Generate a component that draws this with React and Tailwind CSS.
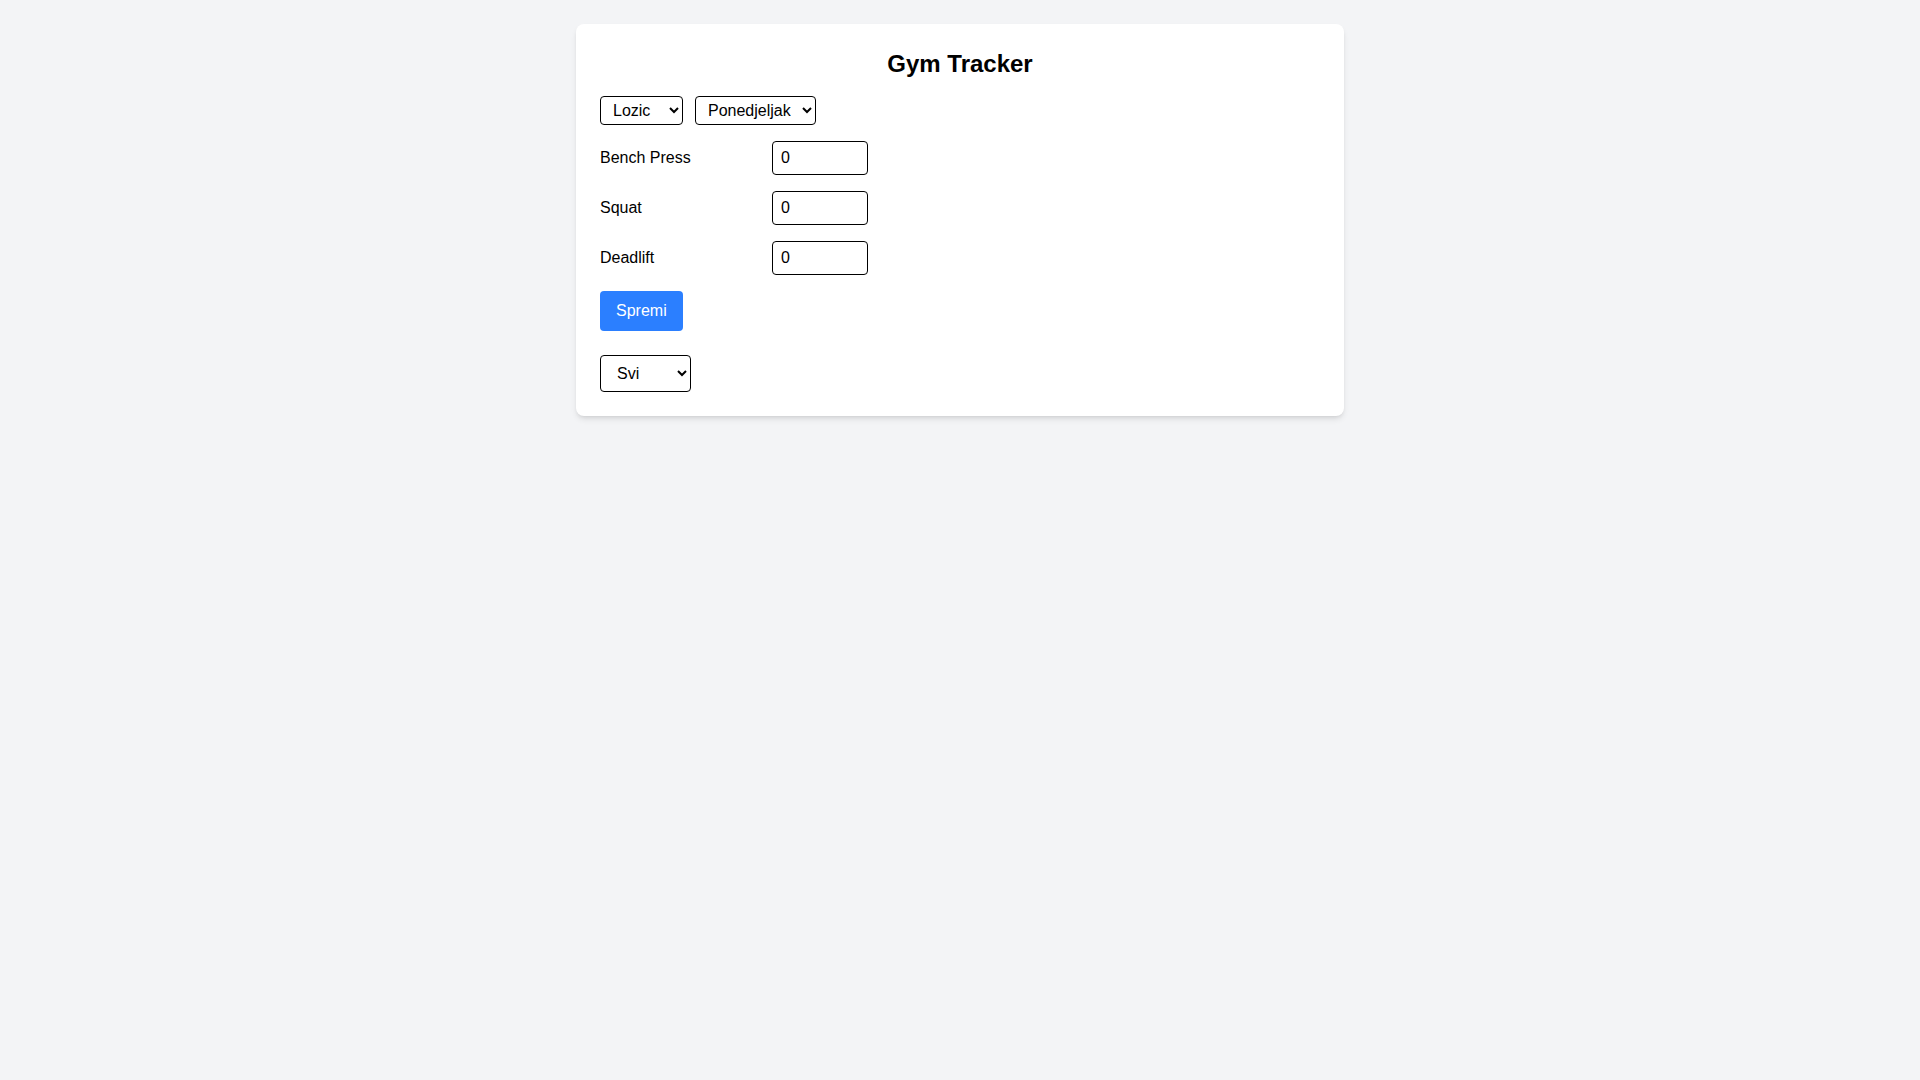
import React, { useState } from "react";

const exercises = ["Bench Press", "Squat", "Deadlift"];

const App = () => {
  const [person, setPerson] = useState("Lozic");
  const [day, setDay] = useState("Ponedjeljak");
  const [filter, setFilter] = useState("Svi");
  const [weights, setWeights] = useState({ "Bench Press": 0, Squat: 0, Deadlift: 0 });

  return (
    <div className="min-h-screen bg-gray-100 pt-6 font-['Liberation_Sans',Arial,sans-serif] text-black">
      <div className="max-w-3xl mx-auto bg-white rounded-lg shadow-md p-6">
        <h1 className="text-2xl font-bold text-center mb-4">Gym Tracker</h1>

        <div className="flex gap-3 mb-4">
          <select
            value={person}
            onChange={(e) => setPerson(e.target.value)}
            className="border rounded px-2 py-1 w-[83px]"
          >
            <option>Lozic</option>
            <option>Marko</option>
          </select>
          <select
            value={day}
            onChange={(e) => setDay(e.target.value)}
            className="border rounded px-2 py-1 w-[121px]"
          >
            <option>Ponedjeljak</option>
            <option>Utorak</option>
            <option>Srijeda</option>
            <option>Četvrtak</option>
            <option>Petak</option>
          </select>
        </div>

        {exercises.map((ex) => (
          <div key={ex} className="flex items-center gap-3 mb-4">
            <label className="w-40">{ex}</label>
            <input
              type="number"
              value={weights[ex]}
              onChange={(e) => setWeights({ ...weights, [ex]: e.target.value })}
              className="border rounded px-2 py-1 w-24"
            />
          </div>
        ))}

        <button className="bg-blue-500 text-white px-4 py-2 rounded">Spremi</button>

        <div className="mt-6">
          <select
            value={filter}
            onChange={(e) => setFilter(e.target.value)}
            className="border rounded px-3 py-2 w-[91px]"
          >
            <option>Svi</option>
            <option>Lozic</option>
            <option>Marko</option>
          </select>
        </div>
      </div>
    </div>
  );
};

export default App;
